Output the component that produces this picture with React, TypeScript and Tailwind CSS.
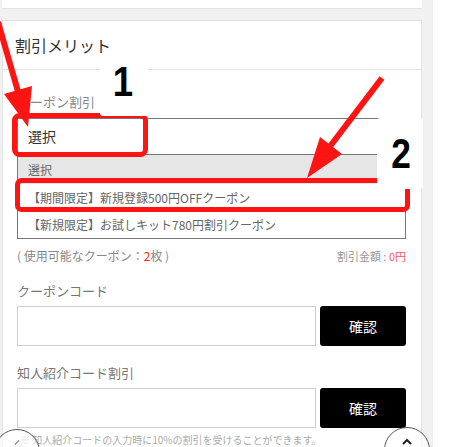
import React from "react";

const jp = "font-['Noto_Sans_CJK_JP','Noto_Sans',sans-serif]";
const num = "font-['Liberation_Sans',sans-serif] text-[43px] font-bold leading-none text-black";

function CodeRow({ label }: { label: string }) {
  return (
    <div>
      <div className="text-[13px] leading-[19px] text-[#777]">{label}</div>
      <div className="mt-[6px] flex gap-[4px]">
        <input className="h-[40px] w-[299px] border border-[#cfcfcf] bg-white outline-none" />
        <button className="h-[40px] flex-1 rounded-[3px] bg-black text-[14px] text-white">確認</button>
      </div>
    </div>
  );
}

function Annotations() {
  const red = "#ff1414";
  return (
    <svg className="pointer-events-none absolute left-0 top-0" width="454" height="447">
      {/* boxes */}
      <rect x="14.5" y="115.5" width="131" height="39" rx="5" fill="none" stroke={red} strokeWidth="5" />
      <rect x="17.5" y="180.5" width="390" height="29" rx="4" fill="none" stroke={red} strokeWidth="5" />
      {/* label cards */}
      <rect x="100" y="65" width="48" height="51" rx="3" fill="#fff" />
      <rect x="377" y="118" width="46" height="71" rx="3" fill="#fff" />
      {/* arrow 1 */}
      <line x1="-2" y1="22" x2="19" y2="95" stroke={red} strokeWidth="6" />
      <polygon points="4,94 32,86 28,127" fill={red} />
      {/* arrow 2 */}
      <line x1="382" y1="78" x2="328" y2="149" stroke={red} strokeWidth="6" />
      <polygon points="320,137 342,154 307,178" fill={red} />
    </svg>
  );
}

export default function App() {
  return (
    <div className={`relative flex h-[447px] w-[454px] overflow-hidden bg-[#f1f1f1] ${jp}`}>
      <div className="w-[433px] pl-[2px]">
        <div className="h-[9px] w-[420px] border-b border-[#e3e3e3] bg-white" />

        <div className="mt-[11px] w-[420px] border border-[#e3e3e3] bg-white">
          <div className="flex h-[48px] items-center pl-[12px] text-[16px] text-[#333]">割引メリット</div>

          <div className="border-t border-[#e3e3e3] pl-[14px] pr-[15px] pt-[22px]">
            <div className="text-[13px] leading-[19px] text-[#888]">クーポン割引</div>

            <div className="mt-[7px] flex h-[37px] items-center border border-[#777] pl-[10px] text-[14px] text-[#333]">
              選択
            </div>
            <div className="border-x border-b border-[#777] text-[12px] text-[#666]">
              <div className="flex h-[29px] items-center bg-[#e6e6e6] pl-[10px]">選択</div>
              <div className="flex h-[27px] items-center pl-[10px]">【期間限定】新規登録500円OFFクーポン</div>
              <div className="flex h-[27px] items-center pl-[10px]">【新規限定】お試しキット780円割引クーポン</div>
            </div>

            <div className="mt-[8px] flex items-center justify-between leading-[18px]">
              <span className="text-[12px] text-[#888]">
                ( 使用可能なクーポン：<span className="text-[#ff2020]">2</span>枚 )
              </span>
              <span className="text-[11px] text-[#999]">
                割引金額 : <span className="text-[#ff5a5a]">0円</span>
              </span>
            </div>

            <div className="mt-[16px]">
              <CodeRow label="クーポンコード" />
            </div>
            <div className="mt-[17px]">
              <CodeRow label="知人紹介コード割引" />
            </div>
            <div className="mt-[5px] pl-[3px] text-[10px] leading-[14px] text-[#aaa]">
              ※ 知人紹介コードの入力時に10%の割引を受けることができます。
            </div>
            <div className="h-[20px]" />
          </div>
        </div>
      </div>
      <div className="flex-1 bg-white" />

      <Annotations />

      <div className={`absolute left-[100px] top-[60px] flex w-[46px] justify-center ${num}`}>
        <span className="inline-block scale-x-[0.85]">1</span>
      </div>
      <div className={`absolute left-[378px] top-[118px] flex h-[71px] w-[46px] items-center justify-center ${num}`}>
        <span className="inline-block scale-x-[0.82]">2</span>
      </div>

      {/* floating round buttons */}
      <div className="absolute left-[-6px] top-[429px] flex h-[46px] w-[46px] items-start justify-center rounded-full border border-[#555] bg-white/60 pt-[12px]">
        <span className="block h-[1px] w-[6px] -rotate-45 bg-[#777]" />
      </div>
      <div className="absolute left-[384px] top-[427px] flex h-[46px] w-[46px] items-start justify-center rounded-full border border-[#555] bg-white/70 pt-[10px]">
        <svg width="12" height="8" viewBox="0 0 12 8">
          <path d="M2 6 L6 2 L10 6" fill="none" stroke="#222" strokeWidth="2" />
        </svg>
      </div>
    </div>
  );
}
